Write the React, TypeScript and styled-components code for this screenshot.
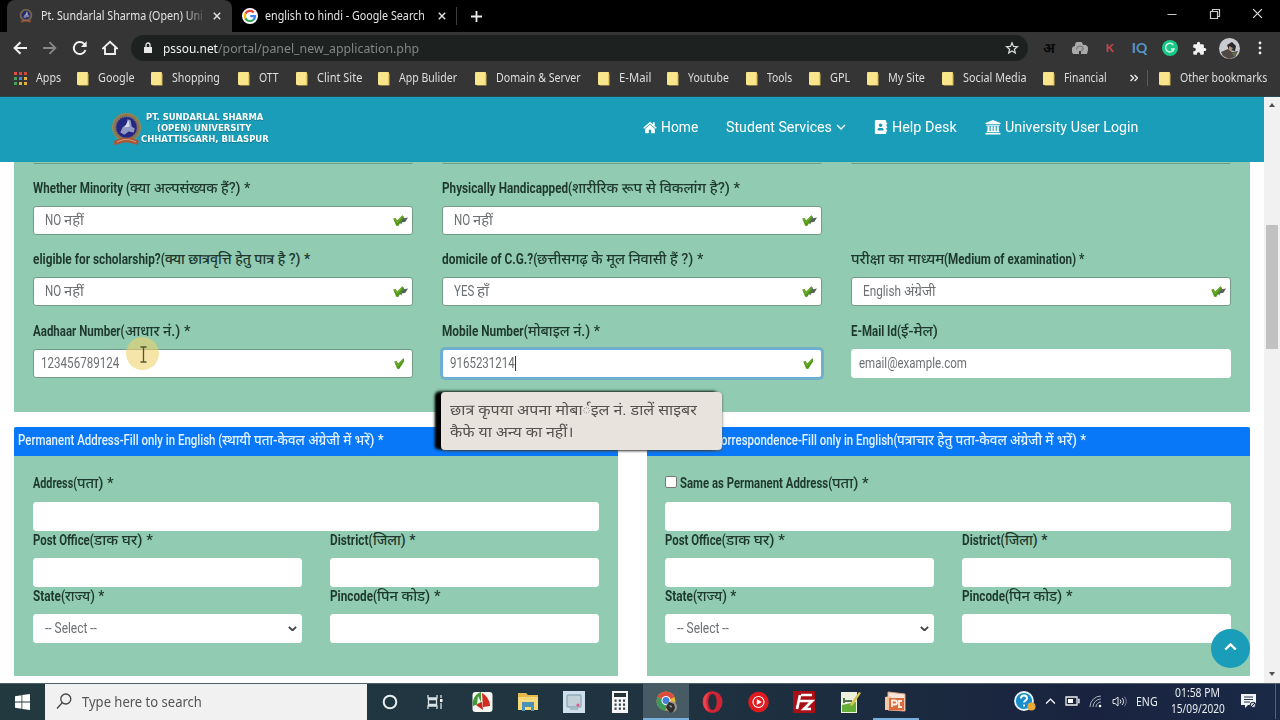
import { useLayoutEffect, useRef, useState } from 'react';
import type { ReactNode } from 'react';
import styled, { createGlobalStyle, css } from 'styled-components';
import { FaAddressBook } from 'react-icons/fa';

const GlobalStyle = createGlobalStyle`
  * { box-sizing: border-box; }
  body { margin: 0; background: #fff; overflow: hidden; }
`;

const fonts = {
  ui: '"Noto Sans", "Open Sans", sans-serif',
  form: 'Roboto, "Noto Sans Devanagari", "Noto Sans", sans-serif',
  logo: '"DejaVu Sans", sans-serif',
};

const colors = {
  teal: '#1a9db8',
  mint: '#91cbb2',
  blue: '#0878f8',
  chrome: '#353535',
};

/* ---------- condensed text ---------- */

const FitBox = styled.span<{ $hindi?: boolean }>`
  display: inline-block;
  flex: none;
  vertical-align: top;
  white-space: pre;
  ${({ $hindi }) => $hindi && css`font-weight: 500;`}
`;

const FitInner = styled.span`
  display: inline-block;
  transform-origin: 0 50%;
  white-space: pre;
`;

// Squeezes a run of text to a fixed width, standing in for a condensed face.
function Fit({ w, hindi, children }: { w: number; hindi?: boolean; children: ReactNode }) {
  const ref = useRef<HTMLSpanElement>(null);
  const [scale, setScale] = useState(1);

  useLayoutEffect(() => {
    if (ref.current) setScale(w / ref.current.offsetWidth);
  }, [w]);

  return (
    <FitBox $hindi={hindi} style={{ width: w }}>
      <FitInner ref={ref} style={{ transform: `scaleX(${scale})` }}>{children}</FitInner>
    </FitBox>
  );
}

type Run = [text: string, width: number];

const Runs = ({ runs, mixed }: { runs: Run[]; mixed?: boolean }) => (
  <>{runs.map(([text, w]) => <Fit key={text} w={w} hindi={mixed && /[\u0900-\u097f]/.test(text)}>{text}</Fit>)}</>
);

/* ---------- browser chrome ---------- */

const Screen = styled.div`
  width: 1280px;
  height: 720px;
  display: flex;
  flex-direction: column;
  overflow: hidden;
  font-family: ${fonts.ui};
`;

const TabStrip = styled.div`
  height: 32px;
  flex: none;
  display: flex;
  padding-left: 7px;
  background: #000;
  color: #e4e4e4;
  font-size: 12px;
  line-height: 32px;
`;

const Tab = styled.div<{ $active?: boolean }>`
  width: ${({ $active }) => ($active ? 225 : 224)}px;
  display: flex;
  align-items: center;
  padding: 0 ${({ $active }) => ($active ? 11 : 10)}px 0 ${({ $active }) => ($active ? 12 : 10)}px;
  gap: ${({ $active }) => ($active ? 8 : 7)}px;
  border-radius: 8px 8px 0 0;
  background: ${({ $active }) => ($active ? colors.chrome : 'transparent')};

  svg:last-child { margin-left: auto; }
`;

const TabTitle = styled.span<{ $fade?: boolean }>`
  display: flex;
  ${({ $fade }) => $fade && css`mask-image: linear-gradient(to right, #000 88%, rgba(0, 0, 0, 0.2));`}
`;

const NewTab = styled.div`
  display: flex;
  align-items: center;
  height: 32px;

  &::before {
    content: '';
    width: 1px;
    height: 18px;
    margin-right: 14px;
    background: #3c3c3c;
  }
`;

const WindowControls = styled.div`
  margin-left: auto;
  display: flex;
  align-items: center;
  height: 27px;
  gap: 31px;
  padding-right: 17px;
`;

const Toolbar = styled.div`
  height: 32px;
  flex: none;
  display: flex;
  align-items: center;
  background: ${colors.chrome};
  padding-left: 12px;
`;

const NavIcons = styled.div`
  display: flex;
  gap: 14px;
  width: 119px;
`;

const Omnibox = styled.div`
  width: 897px;
  height: 26px;
  display: flex;
  align-items: center;
  border-radius: 13px;
  background: #1d2221;
  padding: 0 9px 0 12px;
  font-size: 13px;
  line-height: 26px;
  color: #858585;

  svg:last-child { margin-left: auto; }
`;

const Host = styled.span`
  color: #f2f2f2;
  margin-left: 10px;
`;

const Extensions = styled.div`
  display: grid;
  grid-template-columns: 32px 30px 29px 31px 30px 29px 31px 30px;
  margin-left: 5px;
  place-items: center;
`;

const ExtGlyph = styled.span<{ $color: string; $size: number }>`
  color: ${({ $color }) => $color};
  font: 700 ${({ $size }) => $size}px/24px Lato, ${fonts.form};
`;

const Bookmarks = styled.div`
  height: 33px;
  flex: none;
  display: flex;
  align-items: center;
  padding: 0 0 4px 14px;
  background: ${colors.chrome};
  border-bottom: 1px solid #26484f;
  color: #dedede;
  font-size: 12px;
  line-height: 20px;
`;

const Bookmark = styled.div<{ $w: number; $gap?: number }>`
  width: ${({ $w }) => $w}px;
  display: flex;
  align-items: center;
  flex: none;
  gap: ${({ $gap = 9.5 }) => $gap}px;
`;

const Folder = styled.i`
  width: 11px;
  height: 13px;
  margin-top: 1px;
  border-radius: 1px;
  background: #f9e68c;
  box-shadow: inset -1px 0 #e7ca60, 1px 1px 0 -0.5px #d7b74a;
`;

const AppsGrid = styled.i`
  width: 13px;
  height: 13px;
  margin-top: 1px;
  display: grid;
  grid-template-columns: repeat(3, 3px);
  grid-auto-rows: 3px;
  gap: 2px;
`;

const Dot = styled.i<{ $color: string }>`
  background: ${({ $color }) => $color};
`;

const More = styled.span`
  width: 18px;
  height: 16px;
  display: flex;
  align-items: center;
  border-right: 1px solid #5a5a5a;
  margin-right: 11px;
`;

/* ---------- web page ---------- */

const Viewport = styled.div`
  height: 586px;
  flex: none;
  display: flex;
  position: relative;
`;

const Page = styled.main`
  width: 1264px;
  display: flex;
  flex-direction: column;
  background: #fff;
  font-family: ${fonts.form};
`;

const SiteHeader = styled.header`
  height: 65px;
  flex: none;
  display: flex;
  align-items: center;
  padding: 0 126px 0 112px;
  background: ${colors.teal};
  color: #fff;
`;

const LogoText = styled.div`
  display: flex;
  flex-direction: column;
  align-items: center;
  width: 127px;
  margin-top: -2px;
  font: 700 8.6px/11px ${fonts.logo};
  text-shadow: 0 1px 1px #0b5c7288;
`;

const Nav = styled.nav`
  display: flex;
  align-items: center;
  margin: -5px 0 0 auto;
  gap: 28px;
  font-size: 14.6px;
  line-height: 24px;
`;

const NavLink = styled.a`
  display: flex;
  align-items: center;
  gap: 4px;
`;

const Panel = styled.section`
  height: 250px;
  flex: none;
  margin: 0 14px;
  padding: 0 19px;
  background: ${colors.mint};
`;

const ClippedRow = styled.div`
  display: grid;
  grid-template-columns: repeat(3, 380px);
  justify-content: space-between;
  height: 15px;
`;

const ClippedInput = styled.div`
  height: 2px;
  border-bottom: 1px solid #6a9c86;
  border-radius: 0 0 3px 3px;
`;

const FieldGrid = styled.div`
  display: grid;
  grid-template-columns: repeat(3, 380px);
  grid-auto-rows: 71.3px;
  justify-content: space-between;
`;

const FieldBox = styled.div<{ $col?: string; $h?: number }>`
  display: flex;
  flex-direction: column;
  grid-column: ${({ $col = 'auto' }) => $col};
  height: ${({ $h = 71 }) => $h}px;
`;

const Label = styled.label<{ $h?: number }>`
  height: ${({ $h = 29 }) => $h}px;
  flex: none;
  display: flex;
  color: #1e382f;
  font-size: 14px;
  font-weight: 700;
  line-height: 22px;
`;

const Control = styled.div<{ $state?: 'valid' | 'focus'; $indent?: boolean }>`
  height: 29px;
  flex: none;
  display: flex;
  align-items: center;
  padding: 0 ${({ $indent }) => ($indent ? 4 : 6)}px 0 ${({ $indent }) => ($indent ? 11 : 7)}px;
  border: 1px solid ${({ $state }) => ($state === 'valid' ? '#749b8a' : '#fff')};
  border-radius: 3px;
  background: #fff;
  color: #6c7073;
  font-size: 14px;
  line-height: 27px;

  ${({ $state }) => $state === 'focus' && css`
    border-color: #66afe0;
    box-shadow: 0 0 0 2px #72afc4;
  `}

  svg { margin-left: auto; }
`;

const Caret = styled.i`
  width: 1px;
  height: 15px;
  background: #333;
`;

const AddressColumns = styled.div`
  display: grid;
  grid-template-columns: 604px 603px;
  gap: 29px;
  padding: 15px 14px 0;
`;

const AddressCard = styled.section`
  height: 249px;
  background: ${colors.mint};
`;

const CardTitle = styled.h3`
  height: 29px;
  margin: 0;
  padding-left: 4px;
  display: flex;
  border-radius: 3px 3px 0 0;
  background: ${colors.blue};
  color: #e4f3ff;
  font-size: 14px;
  font-weight: 500;
  line-height: 27px;
`;

const AddressFields = styled.div<{ $right?: boolean }>`
  display: grid;
  grid-template-columns: 269px 269px;
  justify-content: space-between;
  padding: 16px 19px 0 ${({ $right }) => ($right ? 18 : 19)}px;
`;

const Checkbox = styled.i`
  width: 12px;
  height: 12px;
  margin: 4px 3px 0 0;
  border: 1px solid #777;
  border-radius: 2px;
  background: #fff;
`;

const Scrollbar = styled.div`
  width: 16px;
  display: flex;
  flex-direction: column;
  align-items: center;
  background: #f1f1f1;
`;

const Thumb = styled.div`
  width: 12px;
  height: 124px;
  margin-top: 118px;
  margin-bottom: auto;
  background: #c1c1c1;
`;

const ScrollArrow = styled.i<{ $down?: boolean }>`
  margin: ${({ $down }) => ($down ? '0 0 7px' : '6px 0 0')};
  border: 3.5px solid transparent;
  border-width: ${({ $down }) => ($down ? '4px 3.5px 0' : '0 3.5px 4px')};
  border-color: ${({ $down }) => ($down ? '#505050 transparent' : 'transparent transparent #505050')};
`;

const Tooltip = styled.div`
  position: absolute;
  left: 441px;
  top: 295px;
  width: 281px;
  height: 58px;
  padding: 7px 9px;
  border-radius: 4px;
  background: #e8e3dc;
  box-shadow: -7px 0 3px -1px #000, -5px -1px 3px #1c2c24, 0 1px 3px #555;
  color: #56524d;
  font: 15px/22px ${fonts.form};
`;

const ScrollTop = styled.button`
  position: absolute;
  left: 1211px;
  top: 532px;
  width: 39px;
  height: 39px;
  border: 0;
  border-radius: 50%;
  display: grid;
  place-items: center;
  padding: 0 0 4px;
  background: ${colors.teal};
`;

const Pointer = styled.div`
  position: absolute;
  left: 126px;
  top: 240px;
  width: 33px;
  height: 33px;
  border-radius: 50%;
  display: grid;
  place-items: center;
  padding: 2px 0 0 2px;
  background: rgba(240, 211, 105, 0.58);
`;

/* ---------- taskbar ---------- */

const Taskbar = styled.footer`
  height: 37px;
  flex: none;
  display: flex;
  background: linear-gradient(90deg, #22393f, #1f3440 50%, #19233f 85%, #1a2946);
  color: #e8edf0;
  border-top: 1px solid #4c6265;
`;

const Start = styled.div`
  width: 45px;
  display: grid;
  place-items: center;
`;

const SearchBox = styled.div`
  width: 322px;
  display: flex;
  align-items: center;
  gap: 10px;
  padding: 0 0 2px 11px;
  background: #f1f1f1;
  color: #555;
  font-size: 14px;
`;

const TaskItem = styled.div<{ $active?: boolean; $open?: boolean }>`
  width: 46px;
  display: grid;
  place-items: center;
  padding-bottom: 1px;
  background: ${({ $active }) => ($active ? '#475b64' : 'transparent')};
  box-shadow: ${({ $active, $open }) => ($active || $open ? 'inset 0 -2px #76afdc' : 'none')};
`;

const Tray = styled.div`
  margin-left: auto;
  display: flex;
  align-items: center;
  gap: 9px;
  padding-bottom: 2px;
  font-size: 12px;
`;

const Clock = styled.div`
  width: 55px;
  display: flex;
  flex-direction: column;
  align-items: center;
  margin: 0 7px 0 3px;
  line-height: 16px;
`;

const ShowDesktop = styled.i`
  width: 5px;
  height: 36px;
  margin-left: 9px;
  border-left: 1px solid #526078;
`;

/* ---------- drawings ---------- */

const Cross = ({ size = 8, color = '#ddd', stroke = 1.9 }: { size?: number; color?: string; stroke?: number }) => (
  <svg width={size} height={size} viewBox="0 0 10 10" stroke={color} strokeWidth={stroke}>
    <path d="M1 1L9 9M9 1L1 9" />
  </svg>
);

const GoogleLogo = () => (
  <svg width="16" height="16" viewBox="0 0 16 16">
    <circle cx="8" cy="8" r="8" fill="#fff" />
    <g fill="none" strokeWidth="2.2">
      <path d="M11.8 4.5A5.2 5.2 0 0 0 3.4 5.6" stroke="#ea4335" />
      <path d="M3.4 5.5a5.2 5.2 0 0 0 0 5" stroke="#fbbc05" />
      <path d="M3.4 10.4a5.2 5.2 0 0 0 8 1.4" stroke="#34a853" />
      <path d="M11.3 11.8A5.2 5.2 0 0 0 13.1 8.1H8.3" stroke="#4285f4" />
    </g>
  </svg>
);

const Emblem = ({ width, height, dim }: { width: number; height: number; dim?: boolean }) => (
  <svg width={width} height={height} viewBox="0 0 28 32" opacity={dim ? 0.75 : 1}>
    <circle cx="14" cy="14" r="12.2" fill="#242682" stroke="#8b7651" strokeWidth="3.4" />
    <circle cx="14" cy="14" r="13.7" fill="none" stroke="#a39a5c" strokeWidth=".6" />
    <circle cx="14" cy="14" r="10.2" fill="none" stroke="#c3a55f" strokeWidth=".7" strokeDasharray="1 1" />
    <path d="M8 19l2-5 4-3 1-5 3 1 1 6 3 2-1 4-5-1-4 3z" fill="#8f99c4" />
    <path d="M12 14l4-7 1 6z" fill="#d7dced" />
    <path d="M2 27c8-4 16-4 24 0l-1 4-4-1c-5-2-10-2-14 0l-5 1z" fill="#a8573d" />
    <path d="M5 28c6-3 12-3 18 0" fill="none" stroke="#dfb26f" strokeWidth=".8" />
  </svg>
);

const HomeIcon = () => (
  <svg width="14" height="13" viewBox="0 0 14 13" fill="#fff">
    <path d="M7 .8L.2 6.7l.9 1L7 2.7l5.9 5 .9-1L11.7 5V1.3H9.9v2z" />
    <path d="M7 3.6L2.2 7.7v4.5h3.6V8.7h2.4v3.5h3.6V7.7z" />
  </svg>
);

const BankIcon = () => (
  <svg width="16" height="15" viewBox="0 0 16 15" fill="#fff">
    <path d="M8 0L.5 3v1h15V3zM1.2 4.8h13.6v1H1.2zM2.5 6.2h2V11h1.2V6.2h2V11h1V6.2h2V11h1.1V6.2h2V11h.6v1.2H1.8V11h.7zM.5 13h15v1.5H.5z" />
  </svg>
);

const Tick = ({ double }: { double?: boolean }) => (
  <svg width={double ? 15 : 13} height="13" viewBox={double ? '0 0 15 13' : '-1 0 13 13'}>
    {double && <path d="M5.5 7.5L10.6 2l.3 2.3L15 3.5l-2.6 4.2-3.6.7-.3 2z" fill="#56605a" />}
    <path d="M.2 4.6l2.4-.6 1.6 2.6L9.6 1l.6 3.2L5.2 12 3.2 11.8z" fill="#519716" />
    <path d="M1.2 5.4l1-.1 2 3.4 4.6-5.9" fill="none" stroke="#78b834" strokeWidth=".9" />
  </svg>
);

const Chevron = ({ size = 10, color = '#fff', up, stroke = 1.6 }: { size?: number; color?: string; up?: boolean; stroke?: number }) => (
  <svg width={size} height={size * 0.6} viewBox="0 0 10 6" fill="none" stroke={color} strokeWidth={stroke}>
    <path d={up ? 'M1 5l4-4 4 4' : 'M1 1l4 4 4-4'} />
  </svg>
);

const NavigationIcons = () => (
  <NavIcons>
    <svg width="16" height="16" viewBox="0 0 16 16" fill="none" stroke="#f0f0f0" strokeWidth="2"><path d="M15 8H3M8.5 2.2L2.6 8l5.9 5.8" /></svg>
    <svg width="16" height="16" viewBox="0 0 16 16" fill="none" stroke="#888" strokeWidth="1.8"><path d="M1 8h12M7.5 2.2L13.4 8l-5.9 5.8" /></svg>
    <svg width="16" height="16" viewBox="0 0 16 16" fill="none" stroke="#f0f0f0" strokeWidth="2"><path d="M13.5 10A6 6 0 1 1 12 3.7l1.5 1.6" /><path d="M14.7 1v6H9z" fill="#f0f0f0" stroke="none" /></svg>
    <svg width="16" height="16" viewBox="0 0 16 16" fill="none" stroke="#f0f0f0" strokeWidth="1.9"><path d="M1 8.4L8 1.8l7 6.6h-2V14H3V8.4z" /></svg>
  </NavIcons>
);

const ExtensionIcons = () => (
  <Extensions>
    <ExtGlyph $color="#090909" $size={14}>अ</ExtGlyph>
    <svg width="16" height="13" viewBox="0 0 16 13"><path d="M0 10a4 4 0 0 1 3-6 4 4 0 0 1 8-1 4 4 0 0 1 5 5l-1 4H9V9H7v3H1z" fill="#aaa" /><path d="M4.5 7.5a3.5 3.5 0 0 1 7 0M10 6.5v3" stroke="#6d6d6d" fill="none" /></svg>
    <ExtGlyph $color="#c94850" $size={12}>K</ExtGlyph>
    <ExtGlyph $color="#5795cb" $size={14}>IQ</ExtGlyph>
    <svg width="16" height="16" viewBox="0 0 16 16"><circle cx="8" cy="8" r="8" fill="#18c887" /><path d="M11.3 5A4.3 4.3 0 1 0 12 9H9" fill="none" stroke="#d5f8e9" strokeWidth="1.5" /></svg>
    <svg width="15" height="15" viewBox="0 0 24 24" fill="#f1f1f1"><path d="M20.5 11H19V7a2 2 0 0 0-2-2h-4V3.500a2.500 2.500 0 0 0-5 0V5H4a2 2 0 0 0-2 2v3.800h1.500a2.700 2.700 0 0 1 0 5.400H2V20a2 2 0 0 0 2 2h3.800v-1.500a2.700 2.700 0 0 1 5.400 0V22H17a2 2 0 0 0 2-2v-4h1.500a2.500 2.500 0 0 0 0-5z" /></svg>
    <svg width="21" height="21" viewBox="0 0 21 21">
      <circle cx="10.5" cy="10.500" r="10.500" fill="#c9cbd0" />
      <path d="M8 7l5-3 4 4-1 5-6-1z" fill="#29292c" />
      <path d="M2 14l7-3 4 3 6-1-3 6-6 2-6-3z" fill="#504842" />
      <path d="M10 8l4 2-2 3-2-1z" fill="#b58c72" />
      <path d="M13 15l5-1-3 5z" fill="#637049" />
    </svg>
    <svg width="4" height="14" viewBox="0 0 4 14" fill="#eee"><circle cx="2" cy="2" r="1.4" /><circle cx="2" cy="7" r="1.4" /><circle cx="2" cy="12" r="1.4" /></svg>
  </Extensions>
);

const TaskIcon = ({ name }: { name: string }) => (
  <svg width="22" height="22" viewBox="0 0 22 22">
    {name === 'cortana' && <circle cx="11" cy="11" r="6.3" fill="none" stroke="#e6eef1" strokeWidth="2" />}
    {name === 'tasks' && <path d="M3 4v3h9V4M3 18v-3h9v3M3.500 8.500h8v5h-8zM16 4v3m0 5v6" fill="none" stroke="#d9e3e6" strokeWidth="1.3" />}
    {name === 'tasks' && <path d="M15 8h2.500v3H15z" fill="#fff" />}
    {name === 'maxthon' && (
      <>
        <rect x="1.500" y="1" width="20" height="20" rx="3" fill="#f7f7f2" />
        <path d="M10 1v11l-8 3C1 9 4 3 10 1z" fill="#3f9934" />
        <path d="M7 5l3 6-4 2z" fill="#f7f7f2" />
        <path d="M11 2c5 3 8 8 8 13l-7 1z" fill="#d42b22" />
        <path d="M5 14l6-3 1 8z" fill="#c7261e" />
      </>
    )}
    {name === 'files' && (
      <>
        <path d="M1 2h8l2 2h10v14H1z" fill="#e6b94a" />
        <path d="M1 6h20v13H1z" fill="#f8d979" />
        <path d="M5 11h12v9h-3v-4H8v4H5z" fill="#4b92b7" />
      </>
    )}
    {name === 'recorder' && (
      <>
        <rect width="22" height="22" fill="#cfe0ec" />
        <rect x="4" y="4" width="14" height="12" rx="1" fill="#c4d0d8" stroke="#8fabb9" strokeWidth="1.300" />
        <path d="M7 18h8" stroke="#9bb0bc" strokeWidth="1.500" />
        <circle cx="15" cy="14" r="1.600" fill="#e05689" />
      </>
    )}
    {name === 'calc' && (
      <>
        <rect x="3" width="16" height="22" fill="#f6f6f6" />
        <rect x="5" y="2" width="12" height="4" fill="#26343a" />
        {[8.5, 12.5, 16.5].map((y) => [5.5, 9.8, 14].map((x) => <rect key={`${x}-${y}`} x={x} y={y} width="2.100" height="2.300" fill="#35454b" />))}
      </>
    )}
    {name === 'chrome' && (
      <>
        <circle cx="11" cy="10" r="9.500" fill="#e5b93b" />
        <path d="M11 10L2.500 6A9.500 9.500 0 0 1 19.500 6z" fill="#db4b3e" />
        <path d="M2.500 6a9.500 9.500 0 0 0 7.500 13.500l3-8z" fill="#3c985b" />
        <circle cx="11" cy="9.500" r="4.500" fill="#fff" />
        <circle cx="11" cy="9.500" r="3.500" fill="#4181d9" />
        <circle cx="16.500" cy="16" r="5.500" fill="#98938d" />
        <path d="M11 16l3-5 5 2 1 4-2 4-3 1-3-4z" fill="#302f2f" />
        <path d="M14 14l3 1-1 2z" fill="#b5a79b" />
      </>
    )}
    {name === 'opera' && (
      <>
        <ellipse cx="11.500" cy="11" rx="10" ry="10.800" fill="#cf2433" />
        <path d="M9 1a10 10.500 0 0 0 0 20C4 17 4 5 9 1z" fill="#ee4350" />
        <ellipse cx="11.500" cy="11" rx="4.200" ry="8" fill="#20303f" />
      </>
    )}
    {name === 'music' && (
      <>
        <circle cx="11.500" cy="11" r="10.300" fill="#e11b1d" />
        <circle cx="11.500" cy="11" r="5.500" fill="none" stroke="#fff" strokeWidth="1.200" />
        <path d="M9.800 8l5 3-5 3z" fill="#fff" />
      </>
    )}
    {name === 'filezilla' && (
      <>
        <rect width="22" height="22" fill="#a90f15" />
        <path d="M8 4h11M7 4L4 18M6 10h7M12 10h7l-8 8h7" fill="none" stroke="#fff" strokeWidth="2.700" />
      </>
    )}
    {name === 'notepad' && (
      <>
        <path d="M2 1h16v21H2z" fill="#edf2df" />
        <path d="M3 14l14-3v10H3z" fill="#65ae37" />
        <path d="M5 7v5m0-2h8" stroke="#53734e" strokeWidth="2" />
        <path d="M20 1L12 12l-1 3 3-1 8-12z" fill="#d9c54d" />
      </>
    )}
    {name === 'powerpoint' && (
      <>
        <path d="M3 1l17 2v17l-17-1z" fill="#f9e6db" stroke="#e6a17f" />
        <path d="M0 6l6-1v14H0z" fill="#f4c6a6" />
        <rect x="4" y="7" width="15" height="12" fill="#d96b3c" />
        <path d="M7 16V9.500h3a2 2 0 0 1 0 4H7M17 10h-3v6h3" fill="none" stroke="#fff0e4" strokeWidth="1.800" />
      </>
    )}
  </svg>
);

/* ---------- data ---------- */

const bookmarks: [string, number, number][] = [
  ['Google', 37, 74],
  ['Shopping', 48, 87],
  ['OTT', 20, 58],
  ['Clint Site', 45, 82],
  ['App Bulider', 58, 97],
  ['Domain & Server', 85, 123],
  ['E-Mail', 32, 69],
  ['Youtube', 41, 79],
  ['Tools', 25, 63],
  ['GPL', 20, 58],
  ['My Site', 37, 75],
  ['Social Media', 64, 101],
  ['Financial', 43, 87],
];

interface FieldData {
  label: Run[];
  value?: Run[];
  kind?: 'select' | 'text' | 'focus' | 'empty';
  col?: string;
}

const personalFields: FieldData[] = [
  { label: [['Whether Minority (', 97], ['क्या अल्पसंख्यक हैं?) *', 120]], value: [['NO ', 19], ['नहीं', 20]], kind: 'select' },
  { label: [['Physically Handicapped(', 130], ['शारीरिक रूप से विकलांग है?) *', 168]], value: [['NO ', 19], ['नहीं', 20]], kind: 'select' },
  { label: [['eligible for scholarship?(', 132], ['क्या छात्रवृत्ति हेतु पात्र है ?) *', 145]], value: [['NO ', 19], ['नहीं', 20]], kind: 'select', col: '1' },
  { label: [['domicile of C.G.?(', 95], ['छत्तीसगढ़ के मूल निवासी हैं ?) *', 166]], value: [['YES ', 23], ['हाँ', 12]], kind: 'select' },
  { label: [['परीक्षा का माध्यम', 93], ['(Medium of examination) *', 140]], value: [['English ', 41], ['अंग्रेजी', 32]], kind: 'select' },
  { label: [['Aadhaar Number(', 92], ['आधार नं.) *', 65]], value: [['123456789124', 78]], kind: 'text' },
  { label: [['Mobile Number(', 86], ['मोबाइल नं.) *', 72]], value: [['9165231214', 65]], kind: 'focus' },
  { label: [['E-Mail Id(', 50], ['ई-मेल)', 37]], value: [['email@example.com', 108]], kind: 'empty' },
];

const addressFields: FieldData[] = [
  { label: [['Post Office(', 61], ['डाक घर) *', 59]] },
  { label: [['District(', 43], ['जिला) *', 42]] },
  { label: [['State(', 32], ['राज्य) *', 39]], kind: 'select' },
  { label: [['Pincode(', 47], ['पिन कोड) *', 63]] },
];

const taskIcons = ['cortana', 'tasks', 'maxthon', 'files', 'recorder', 'calc', 'chrome', 'opera', 'music', 'filezilla', 'notepad', 'powerpoint'];

function Field({ label, value = [], kind = 'empty', col }: FieldData) {
  const state = kind === 'focus' ? 'focus' : kind === 'empty' ? undefined : 'valid';
  return (
    <FieldBox $col={col}>
      <Label><Runs runs={label} mixed /></Label>
      <Control $state={state} $indent={kind === 'select'}>
        <Runs runs={value} />
        {kind === 'focus' && <Caret />}
        {kind !== 'empty' && <Tick double={kind === 'select'} />}
      </Control>
    </FieldBox>
  );
}

function AddressForm({ title, same }: { title: Run[]; same?: boolean }) {
  return (
    <AddressCard>
      <CardTitle><Runs runs={title} /></CardTitle>
      <AddressFields $right={same}>
        <FieldBox $col="1 / 3" $h={57}>
          <Label $h={30}>
            {same && <Checkbox />}
            <Runs mixed runs={[[same ? 'Same as Permanent Address(' : 'Address(', same ? 152 : 44], ['पता) *', 37]]} />
          </Label>
          <Control />
        </FieldBox>
        {addressFields.map(({ label, kind }) => (
          <FieldBox key={label[0][0]} $h={56.3}>
            <Label><Runs runs={label} mixed /></Label>
            <Control $indent>
              {kind === 'select' && <Fit w={52}>-- Select --</Fit>}
              {kind === 'select' && <Chevron size={9} color="#3f4144" stroke={2} />}
            </Control>
          </FieldBox>
        ))}
      </AddressFields>
    </AddressCard>
  );
}

function BrowserChrome() {
  return (
    <>
      <TabStrip>
        <Tab $active>
          <Emblem width={14} height={14} dim />
          <TabTitle $fade><Fit w={162}>Pt. Sundarlal Sharma (Open) Uni</Fit></TabTitle>
          <Cross />
        </Tab>
        <Tab>
          <GoogleLogo />
          <TabTitle><Fit w={160}>english to hindi - Google Search</Fit></TabTitle>
          <Cross />
        </Tab>
        <NewTab>
          <svg width="11" height="11" viewBox="0 0 11 11" stroke="#eee" strokeWidth="1.8"><path d="M5.5 0v11M0 5.5h11" /></svg>
        </NewTab>
        <WindowControls>
          <svg width="12" height="12" viewBox="0 0 12 12" stroke="#ccc"><path d="M1.5 6.5h9" /></svg>
          <svg width="12" height="12" viewBox="0 0 12 12" fill="none" stroke="#ccc" strokeWidth="1.2"><path d="M1.5 3.5h7v7h-7zM3.5 3V1.5h7v7H9" /></svg>
          <Cross size={11} stroke={1.1} />
        </WindowControls>
      </TabStrip>
      <Toolbar>
        <NavigationIcons />
        <Omnibox>
          <svg width="10" height="12" viewBox="0 0 10 12"><path d="M1 5h8v6H1z" fill="#e8e8e8" /><path d="M3 5V3a2 2 0 0 1 4 0v2" fill="none" stroke="#e8e8e8" strokeWidth="1.3" /></svg>
          <Host><Fit w={55}>pssou.net</Fit></Host>
          <Fit w={201}>/portal/panel_new_application.php</Fit>
          <svg width="14" height="14" viewBox="0 0 14 14" fill="none" stroke="#ddd" strokeWidth="1.2"><path d="M7 1.8l1.5 3.6 3.900.3-3 2.500.9 3.800L7 10l-3.300 2 .9-3.800-3-2.500 3.900-.3z" /></svg>
        </Omnibox>
        <ExtensionIcons />
      </Toolbar>
      <Bookmarks>
        <Bookmark $w={63} $gap={9}>
          <AppsGrid>
            {['#e34f45', '#d3463e', '#d3463e', '#43a15a', '#4c83dd', '#e0b33d', '#43a15a', '#e0b33d', '#e0b33d'].map((c, i) => <Dot key={i} $color={c} />)}
          </AppsGrid>
          <Fit w={25}>Apps</Fit>
        </Bookmark>
        {bookmarks.map(([name, textWidth, width]) => (
          <Bookmark key={name} $w={width}><Folder /><Fit w={textWidth}>{name}</Fit></Bookmark>
        ))}
        <More>
          <svg width="8" height="8" viewBox="0 0 8 8" fill="none" stroke="#eee" strokeWidth="1.4"><path d="M.5 1l3 3-3 3M4.500 1l3 3-3 3" /></svg>
        </More>
        <Bookmark $w={110}><Folder /><Fit w={87}>Other bookmarks</Fit></Bookmark>
      </Bookmarks>
    </>
  );
}

function UniversityPage() {
  return (
    <Page>
      <SiteHeader>
        <Emblem width={29} height={33} />
        <LogoText>
          <Fit w={117}>PT. SUNDARLAL SHARMA</Fit>
          <Fit w={95}>(OPEN) UNIVERSITY</Fit>
          <Fit w={128}>CHHATTISGARH, BILASPUR</Fit>
        </LogoText>
        <Nav>
          <NavLink><HomeIcon /><Fit w={37}>Home</Fit></NavLink>
          <NavLink><Fit w={106}>Student Services</Fit><Chevron size={10} stroke={1.3} /></NavLink>
          <NavLink><FaAddressBook size={14} /><Fit w={65}>Help Desk</Fit></NavLink>
          <NavLink><BankIcon /><Fit w={133}>University User Login</Fit></NavLink>
        </Nav>
      </SiteHeader>
      <Panel>
        <ClippedRow><ClippedInput /><ClippedInput /><ClippedInput /></ClippedRow>
        <FieldGrid>
          {personalFields.map((field) => <Field key={field.label[0][0]} {...field} />)}
        </FieldGrid>
      </Panel>
      <AddressColumns>
        <AddressForm title={[['Permanent Address-Fill only in English (', 204], ['स्थायी पता-केवल अंग्रेजी में भरें) *', 162]]} />
        <AddressForm same title={[['Address for Correspondence-Fill only in English(', 246], ['पत्राचार हेतु पता-केवल अंग्रेजी में भरें) *', 189]]} />
      </AddressColumns>
    </Page>
  );
}

function WindowsTaskbar() {
  return (
    <Taskbar>
      <Start>
        <svg width="15" height="16" viewBox="0 0 15 16" fill="#fff"><path d="M0 2.2l6.5-1v6.3H0zM7.3 1L15 0v7.5H7.3zM0 8.4h6.5v6.3l-6.5-1zM7.3 8.4H15V16l-7.7-1.1z" /></svg>
      </Start>
      <SearchBox>
        <svg width="16" height="17" viewBox="0 0 16 17" fill="none" stroke="#444" strokeWidth="1.3"><circle cx="9.8" cy="6" r="5" /><path d="M6.2 9.8L1 15.5" /></svg>
        <Fit w={120}>Type here to search</Fit>
      </SearchBox>
      {taskIcons.map((name) => (
        <TaskItem key={name} $active={name === 'chrome'} $open={name === 'powerpoint'}><TaskIcon name={name} /></TaskItem>
      ))}
      <Tray>
        <svg width="22" height="20" viewBox="0 0 22 20"><circle cx="10" cy="10" r="9" fill="#188dce" stroke="#e8f5fb" strokeWidth="1.8" /><path d="M7 7.5c0-4 6-4 6 0 0 2-3 2-3 4m0 2v2" fill="none" stroke="#fff" strokeWidth="2" /><circle cx="17.5" cy="15.5" r="4" fill="#e9aa36" /></svg>
        <Chevron size={11} up stroke={1.2} />
        <svg width="15" height="10" viewBox="0 0 15 10"><path d="M1 1h11v8H1zM13 3.5h1v3h-1" fill="none" stroke="#eee" strokeWidth="1.3" /><path d="M3 3h5v4H3z" fill="#fff" /></svg>
        <svg width="14" height="13" viewBox="0 0 14 13" fill="none" stroke="#a9b2bf"><path d="M1 12A11 11 0 0 1 12 1M4 12a8 8 0 0 1 8-8M7 12a5 5 0 0 1 5-5" /><circle cx="11" cy="11" r="1.3" fill="#fff" stroke="none" /></svg>
        <svg width="15" height="13" viewBox="0 0 15 13" fill="none" stroke="#e1e5e9"><path d="M1 4.5h2L6 2v9L3 8.5H1zM8 4.5q2 2 0 4M10 3q3.2 3.5 0 7" /><path d="M12.3 1.5q4 5 0 10" stroke="#717d8e" /></svg>
        <Fit w={22}>ENG</Fit>
        <Clock><Fit w={45}>01:58 PM</Fit><Fit w={54}>15/09/2020</Fit></Clock>
        <svg width="16" height="17" viewBox="0 0 16 17"><path d="M0 1h15v11H7l-3 3v-3H0z" fill="#f1f3f5" /><path d="M3 4h9M3 6.5h9M3 9h6" stroke="#25344b" /><circle cx="12" cy="12" r="2.800" fill="#c8cdd4" stroke="#1e2a46" /><path d="M10 14l4-4" stroke="#1e2a46" /></svg>
        <ShowDesktop />
      </Tray>
    </Taskbar>
  );
}

export default function App() {
  return (
    <Screen>
      <GlobalStyle />
      <BrowserChrome />
      <Viewport>
        <UniversityPage />
        <Scrollbar>
          <ScrollArrow />
          <Thumb />
          <ScrollArrow $down />
        </Scrollbar>
        <Pointer>
          <svg width="9" height="17" viewBox="0 0 9 17" fill="none" stroke="#59532f" strokeWidth="1.3"><path d="M1.5 1h6M4.5 1v15M1.5 16h6" /></svg>
        </Pointer>
        <Tooltip>
          <Fit w={247}>छात्र कृपया अपना मोबार्इल नं. डालें साइबर</Fit>
          <Fit w={123}>कैफे या अन्य का नहीं।</Fit>
        </Tooltip>
        <ScrollTop aria-label="Back to top"><Chevron size={13} up stroke={1.8} /></ScrollTop>
      </Viewport>
      <WindowsTaskbar />
    </Screen>
  );
}
